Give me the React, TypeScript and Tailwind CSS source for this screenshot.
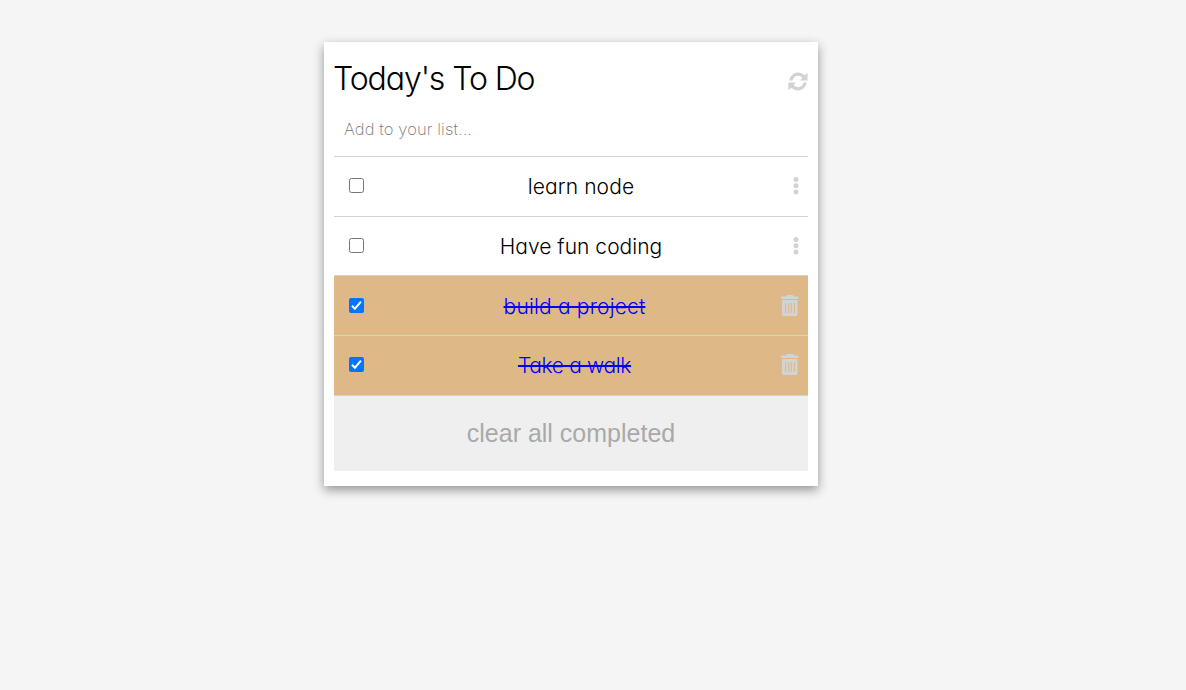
import React from "react";

type Item = { text: string; done: boolean; className: string; height: string };

const items: Item[] = [
  { text: "learn node", done: false, className: "tracking-[0.1px] pl-[3px]", height: "h-[60px] pb-[2px]" },
  { text: "Have fun coding", done: false, className: "tracking-[0.03px] pl-[3px]", height: "h-[59px] pb-px" },
  { text: "build a project", done: true, className: "tracking-[0.17px] pr-[10px]", height: "h-[60px]" },
  { text: "Take a walk", done: true, className: "tracking-[-0.35px] pr-[10px]", height: "h-[60px] pb-[2px]" },
];

function RefreshIcon() {
  return (
    <svg className="mt-[30px] h-[19px] w-5 shrink-0 fill-[#d3d3d3]" viewBox="0 0 20 18" preserveAspectRatio="none">
      <path d="M1.3 8C2.1 3.5 5.7.5 10 .5c2.6 0 4.800 1 6.400 2.600L19.600 1v7h-7.400l2.100-2.400C13.200 4.300 11.800 3.600 10 3.600 7.300 3.600 5.200 5.300 4.500 8Z" />
      <path d="M18.700 10c-.8 4.500-4.400 7.500-8.700 7.500-2.600 0-4.800-1-6.400-2.600L.4 17v-7h7.400l-2.100 2.400c1.100 1.300 2.500 2 4.300 2 2.700 0 4.800-1.700 5.500-4.400Z" />
    </svg>
  );
}

function TrashIcon() {
  return (
    <svg className="h-[21px] w-[17.5px] fill-[#d3d3d3]" viewBox="0 0 17 21" preserveAspectRatio="none">
      <path d="M0 2.200c0-.5.3-.8.8-.8h3.800C5 .5 5.600 0 6.700 0h3.600c1.100 0 1.700.5 2.100 1.400h3.800c.5 0 .8.3.8.8V4H0Z" />
      <path
        fillRule="evenodd"
        d="M1 5h15v14.200c0 1-.7 1.800-1.700 1.800H2.700c-1 0-1.700-.8-1.700-1.800ZM4 8v10h1V8ZM7 8v10h1V8ZM9.500 8v10h1V8ZM12.500 8v10h1V8Z"
      />
    </svg>
  );
}

function DotsIcon() {
  return (
    <svg className="h-[18px] w-[6px] fill-[#d3d3d3]" viewBox="0 0 6 18">
      <circle cx="3" cy="2.600" r="2.500" />
      <circle cx="3" cy="8.800" r="2.500" />
      <circle cx="3" cy="15" r="2.500" />
    </svg>
  );
}

function Checkbox({ checked }: { checked: boolean }) {
  return (
    <svg className="size-[15px]" viewBox="0 0 15 15" role="checkbox" aria-checked={checked}>
      {checked ? (
        <>
          <rect width="15" height="15" rx="2" fill="#0075ff" />
          <path d="M3 7.800 5.900 10.700 12 3.700" fill="none" stroke="#fff" strokeWidth="2" />
        </>
      ) : (
        <rect x=".5" y=".5" width="14" height="14" rx="2" fill="#fff" stroke="#767676" />
      )}
    </svg>
  );
}

export default function App() {
  return (
    <div className="flex min-h-screen items-start bg-[#f5f5f5] pt-[42px] pl-[324px] font-['Inter',sans-serif] font-light text-black [font-feature-settings:'cv11']">
      <main className="w-[494px] bg-white px-[10px] pb-[15.4px] shadow-[0_4px_10px_rgba(0,0,0,0.4)]">
        <header className="flex h-[64px] justify-between">
          <h1 className="-ml-px pt-[13px] text-[32px] leading-[48px] tracking-[-1.1px] whitespace-nowrap">Today's To Do</h1>
          <RefreshIcon />
        </header>
        <div className="flex h-[50px] items-start px-[10px] pt-[11px]">
          <span className="text-[16.5px] leading-[24px] font-extralight tracking-[0.12px] text-[#757575]">Add to your list...</span>
        </div>
        <ul>
          {items.map((item) => (
            <li
              key={item.text}
              className={`grid grid-cols-[30px_1fr_28px] items-center border-t border-[#d3d3d3] pl-[15px] ${item.height} ${item.done ? "bg-[#deb887]" : ""}`}
            >
              <Checkbox checked={item.done} />
              <span className={`pt-[2px] text-center text-[21px] leading-[30px] ${item.className} ${item.done ? "text-[#0000ff] line-through decoration-2" : ""}`}>
                {item.text}
              </span>
              <span className={`flex justify-end ${item.done ? "pr-[9.5px]" : "pr-[9px]"}`}>{item.done ? <TrashIcon /> : <DotsIcon />}</span>
            </li>
          ))}
        </ul>
        <button className="block h-[76px] w-full border-t border-[#d3d3d3] bg-[#efefef] pt-px font-['Liberation_Sans',Arial,sans-serif] text-[25px] font-normal text-[#a9a9a9]">
          clear all completed
        </button>
      </main>
    </div>
  );
}
